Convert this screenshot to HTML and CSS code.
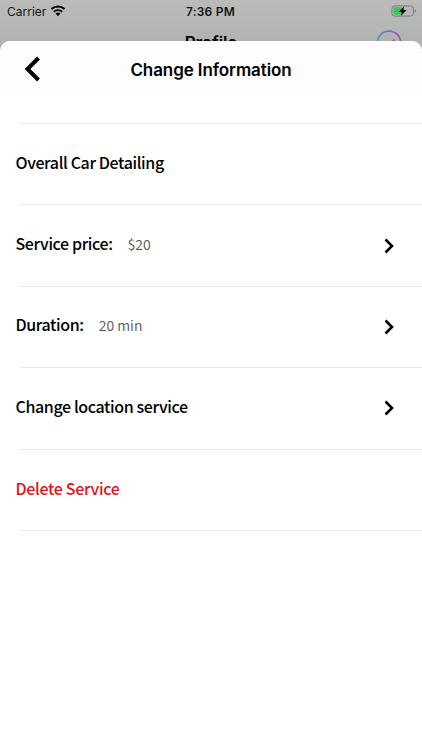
FILE: index.html
```
<!DOCTYPE html>
<html lang="en">
    <head>
        <meta charset="utf-8">
        <meta name="viewport" content="width=device-width, initial-scale=1">
        <title>Change Information</title>
        <link rel="stylesheet" href="styles.css">
    </head>
    <body>
        <div class="status-bar">
            <div class="carrier">
                <span>Carrier</span>
                <svg class="wifi" viewBox="0 0 16 12" width="16" height="12">
                    <path d="M1.4 4.1A10 10 0 0 1 14.6 4.1M3.8 6.7A6.6 6.6 0 0 1 12.2 6.7" fill="none" stroke="#000" stroke-width="2"/>
                    <path d="M8 11.2L5.5 8.6A3.6 3.6 0 0 1 10.5 8.6Z"/>
                </svg>
            </div>
            <div class="time">7:36 PM</div>
            <svg class="battery" viewBox="0 0 26 12" width="26" height="12">
                <rect x="0.9" y="0.9" width="21.4" height="10.2" rx="2.8" fill="none" stroke="#777" stroke-width="1"/>
                <rect x="2.4" y="2.3" width="9" height="7.4" rx="1.4" fill="#35c759"/>
                <path d="M23.6 4v4c1.6-.8 1.6-3.2 0-4z" fill="#777"/>
                <path d="M13.4 1L7.8 6.9h3.1L9.8 11 15.6 5.1h-3.4z" fill="#000"/>
            </svg>
        </div>
        <div class="profile">
            <div class="profile-title">Profile</div>
            <svg class="check" viewBox="0 0 26 26" width="26" height="26">
                <defs>
                    <linearGradient id="ring" x1="0" y1="0" x2="1" y2="0">
                        <stop offset="0" stop-color="#529cbd"/>
                        <stop offset=".5" stop-color="#756fbe"/>
                        <stop offset="1" stop-color="#9658b5"/>
                    </linearGradient>
                </defs>
                <circle cx="13" cy="13" r="11.8" fill="none" stroke="url(#ring)" stroke-width="1.7"/>
                <path d="M8 13.5l4 4 6.5-8" fill="none" stroke="#8d64ba" stroke-width="2"/>
            </svg>
        </div>
        <div class="sheet">
            <div class="header">
                <svg class="back" viewBox="0 0 16 26" width="16" height="26">
                    <path d="M14.5 2L3.5 13l11 11" fill="none" stroke="#000" stroke-width="4"/>
                </svg>
                <h1>Change Information</h1>
            </div>
            <div class="list">
                <div class="row">
                    <span class="label">Overall Car Detailing</span>
                </div>
                <div class="row">
                    <span class="label">Service price:</span>
                    <span class="value">$20</span>
                    <svg class="arrow" viewBox="0 0 10 16" width="10" height="16"><path d="M1.5 1.5L8 8l-6.5 6.5"/></svg>
                </div>
                <div class="row">
                    <span class="label">Duration:</span>
                    <span class="value">20 min</span>
                    <svg class="arrow" viewBox="0 0 10 16" width="10" height="16"><path d="M1.5 1.5L8 8l-6.5 6.5"/></svg>
                </div>
                <div class="row">
                    <span class="label">Change location service</span>
                    <svg class="arrow" viewBox="0 0 10 16" width="10" height="16"><path d="M1.5 1.5L8 8l-6.5 6.5"/></svg>
                </div>
                <div class="row">
                    <span class="label delete">Delete Service</span>
                </div>
            </div>
        </div>
    </body>
</html>
```
FILE: styles.css
```
* {
    box-sizing: border-box;
}
body {
    margin: 0;
    height: 750px;
    overflow: hidden;
    display: flex;
    flex-direction: column;
    background: linear-gradient(#bbbcba, #adafac 60px);
    font-family: Inter, sans-serif;
    color: #000;
    white-space: nowrap;
}
.status-bar {
    height: 22px;
    flex: none;
    display: grid;
    grid-template-columns: 1fr auto 1fr;
    align-items: center;
    padding: 0 5px 0 7px;
    color: #151515;
}
.carrier {
    display: flex;
    align-items: center;
    gap: 4px;
    font-size: 12px;
}
.time {
    margin-right: 3px;
    font-size: 12px;
    font-weight: 600;
    letter-spacing: 0.25px;
}
.battery {
    justify-self: end;
}
.profile {
    height: 19px;
    flex: none;
    display: grid;
    grid-template-columns: 1fr auto 1fr;
    align-items: start;
    padding: 0 20px 0 20px;
}
.profile-title {
    grid-column: 2;
    margin-top: 11px;
    font-size: 17px;
    line-height: 20px;
    font-weight: 600;
    letter-spacing: -0.1px;
}
.check {
    justify-self: end;
    margin-top: 8px;
}
.sheet {
    position: relative;
    flex: 1;
    background: #fff;
    border-radius: 10px 10px 0 0;
    overflow: hidden;
}
.header {
    height: 56px;
    display: grid;
    grid-template-columns: 1fr auto 1fr;
    align-items: center;
    padding: 0 24px;
    background: #fdfdfd;
}
.header h1 {
    margin: 2px 0 0;
    font-size: 17px;
    font-weight: 600;
    letter-spacing: -0.1px;
}
.list {
    margin-top: 26px;
}
.row {
    height: 81.4px;
    display: flex;
    align-items: center;
    padding: 0 28.5px 0 15.5px;
    background: linear-gradient(#e9e9e9, #e9e9e9) 20px 0 / 100% 1px no-repeat;
    font-family: "Noto Sans CJK KR", sans-serif;
}
.row:last-child {
    height: 82.4px;
    background-image: linear-gradient(#e9e9e9, #e9e9e9), linear-gradient(#e9e9e9, #e9e9e9);
    background-position: 20px 0, 20px 100%;
}
.label {
    margin-top: -4px;
    font-size: 16px;
    font-weight: 500;
    letter-spacing: -0.38px;
}
.value {
    margin: -3px 0 0 15px;
    font-size: 14px;
    font-weight: 350;
    color: #555;
}
.delete {
    color: #e0141a;
    letter-spacing: -0.33px;
}
.arrow {
    margin: 1px 0 0 auto;
    fill: none;
    stroke: #000;
    stroke-width: 2.6;
}
```
